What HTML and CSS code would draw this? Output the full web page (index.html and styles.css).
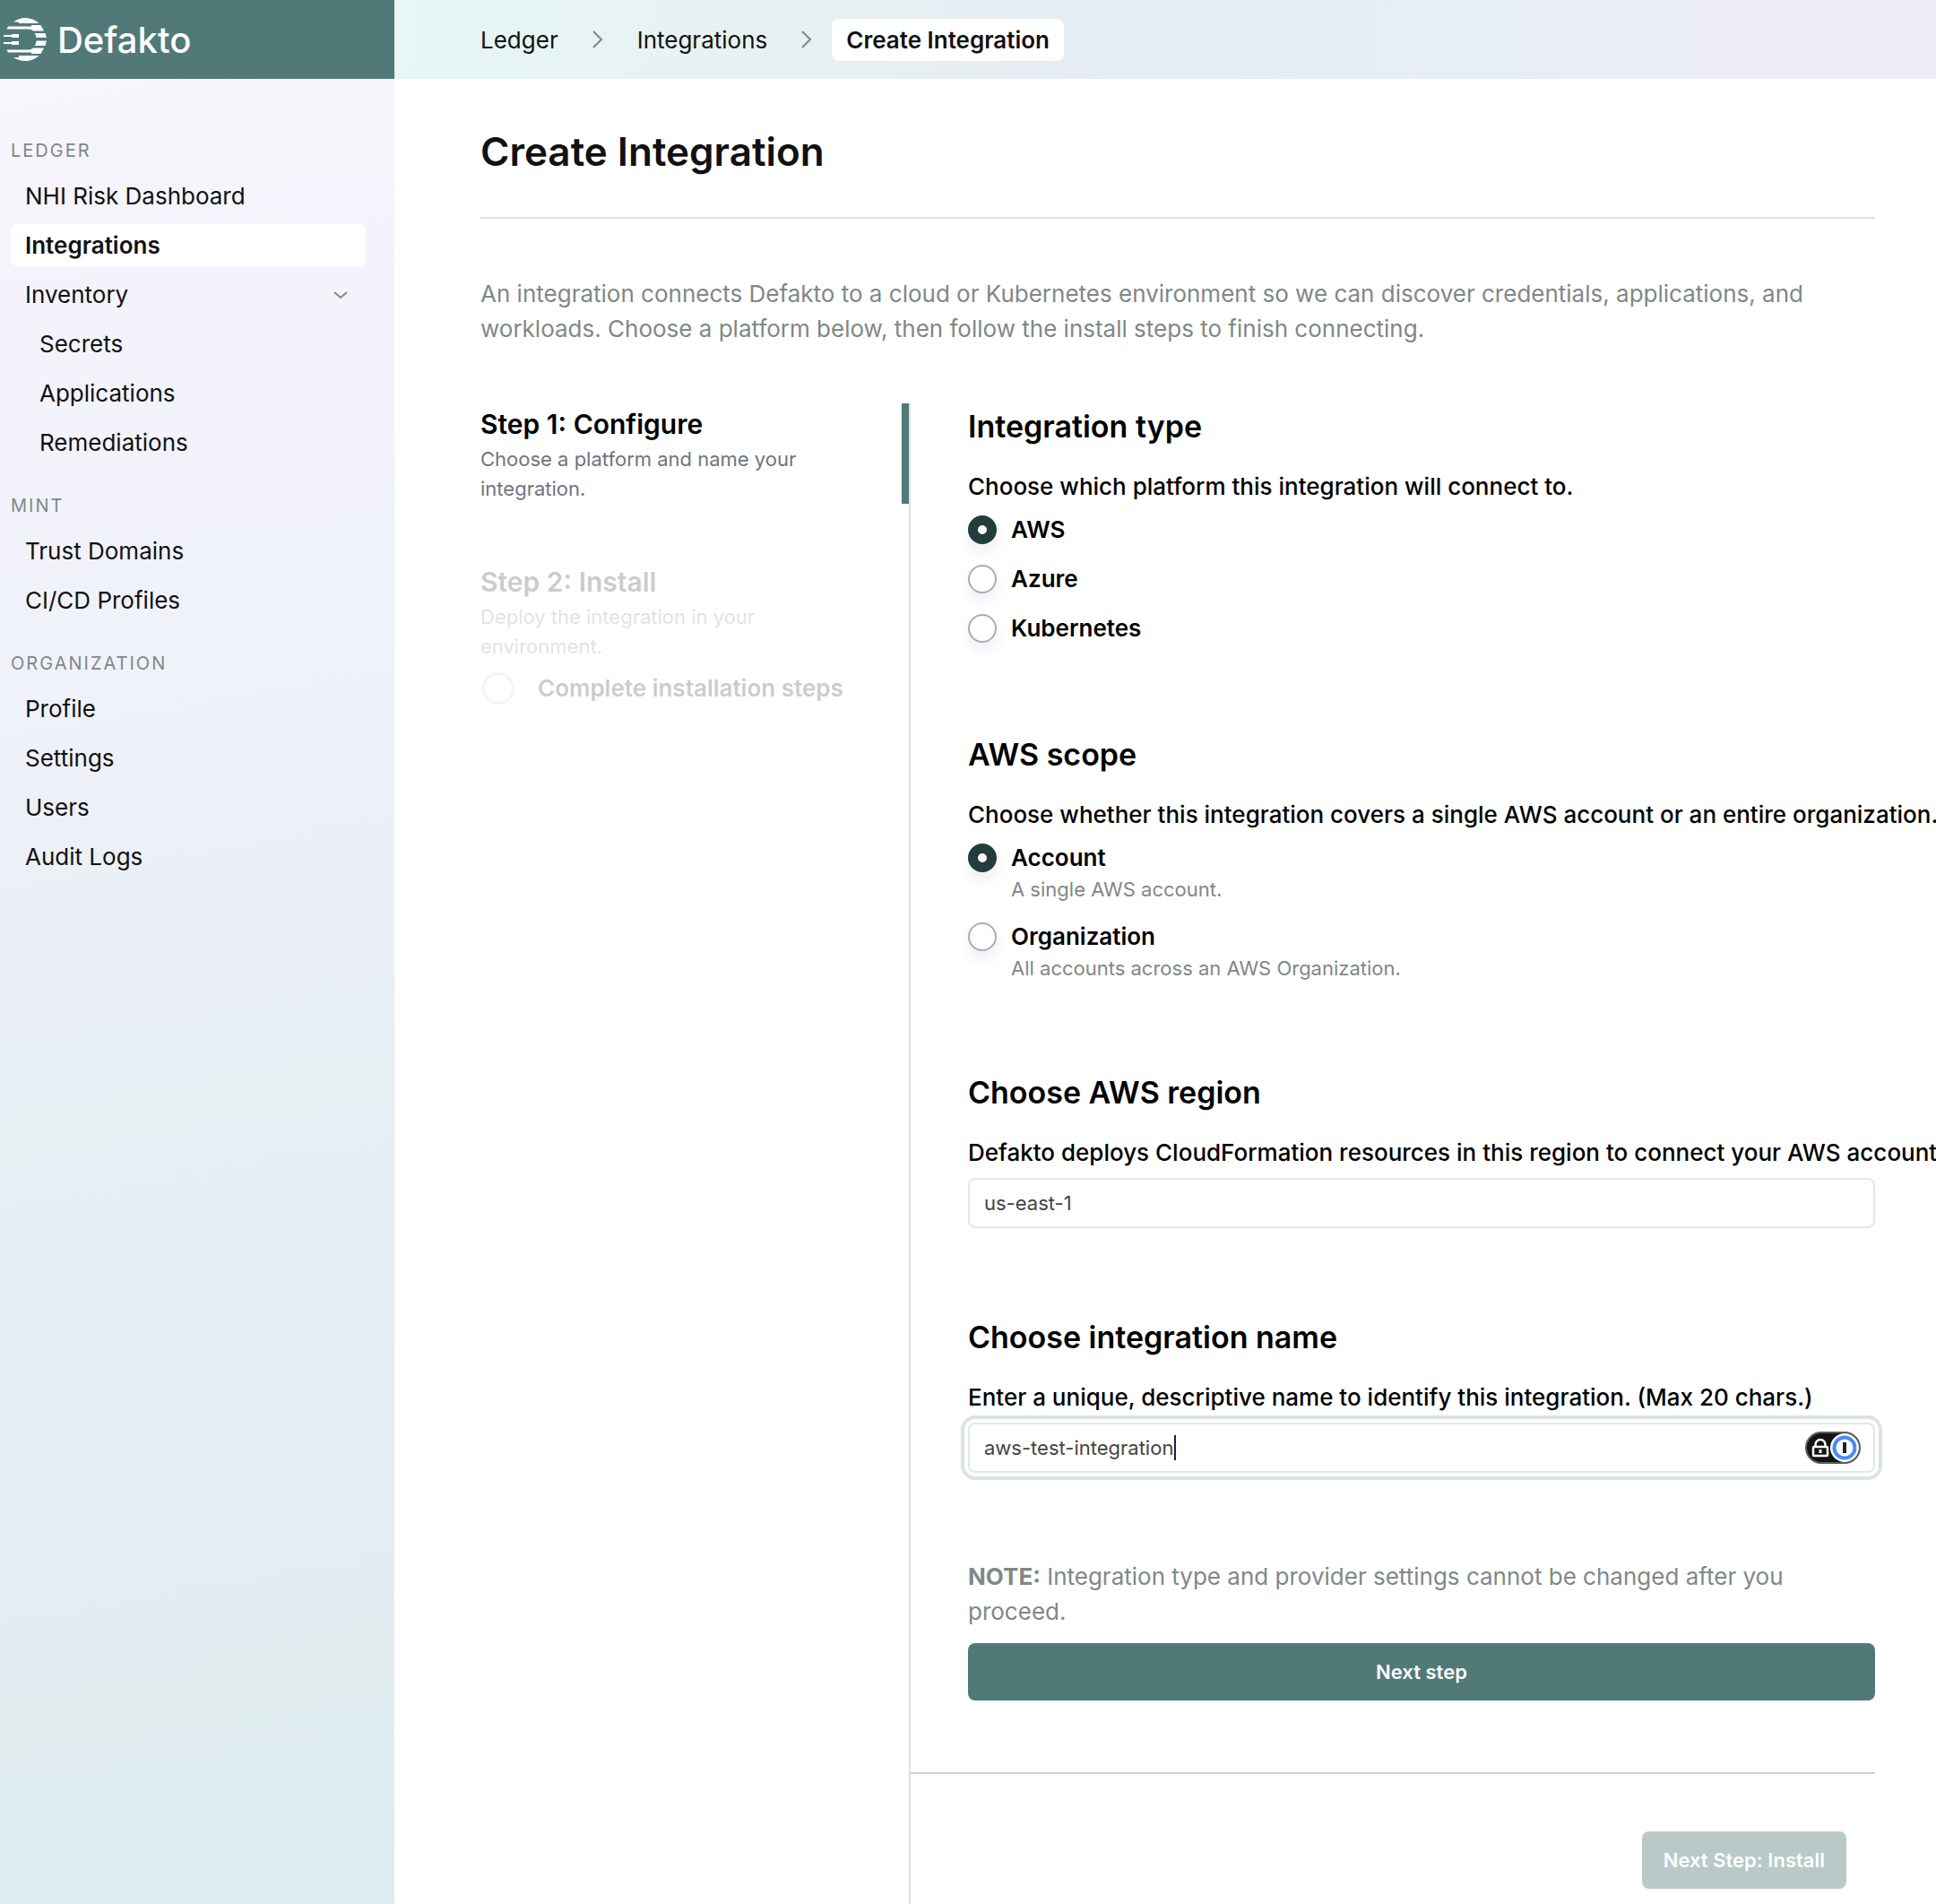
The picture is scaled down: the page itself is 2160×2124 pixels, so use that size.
FILE: index.html
```html
<!DOCTYPE html>
<html lang="en">
<head>
  <meta charset="UTF-8">
  <meta name="viewport" content="width=device-width, initial-scale=1">
  <title>Create Integration - Defakto</title>
  <link rel="stylesheet" href="styles.css">
</head>
<body>

  <aside class="sidebar">
    <a class="logo" href="#">
      <svg class="logo-mark" viewBox="0 0 48 48" fill="#fff" aria-hidden="true">
        <path d="M11 4.5Q17 0 24 0Q33 0 39.500 6H17V4.500Z"/>
        <path d="M31 8H41.500L45 14.500H33Q31 12.500 28 12.500H3.500L5 9.500H31Z"/>
        <path d="M34.500 17H46.500L48 22H36.500Q36.500 19 34.500 17Z"/>
        <path d="M0 19H9V18H17V22H9V21H0Z"/>
        <path d="M0 27H9V26H17V30H9V29H0Z"/>
        <path d="M36.500 25.500H48L46.500 31H34.500Q36.500 29 36.500 25.500Z"/>
        <path d="M3.500 35.500H28Q31 35.500 33 33.500H45L41.500 40H31V38.500H5Z"/>
        <path d="M17 42H39.500Q33 48 24 48Q17 48 11 44H17Z"/>
      </svg>
      <span>Defakto</span>
    </a>

    <nav class="menu">
      <div class="menu-title">LEDGER</div>
      <a href="#">NHI Risk Dashboard</a>
      <a href="#" class="active">Integrations</a>
      <a href="#">Inventory
        <svg class="chevron" viewBox="0 0 16 16" aria-hidden="true"><path d="M1 5l7 6 7-6"/></svg>
      </a>
      <a href="#" class="sub">Secrets</a>
      <a href="#" class="sub">Applications</a>
      <a href="#" class="sub">Remediations</a>

      <div class="menu-title">MINT</div>
      <a href="#">Trust Domains</a>
      <a href="#">CI/CD Profiles</a>

      <div class="menu-title">ORGANIZATION</div>
      <a href="#">Profile</a>
      <a href="#">Settings</a>
      <a href="#">Users</a>
      <a href="#">Audit Logs</a>
    </nav>
  </aside>

  <div class="page">
    <header class="topbar">
      <a href="#">Ledger</a>
      <svg class="separator" viewBox="0 0 12 20" aria-hidden="true"><path d="M1 1l9 9-9 9"/></svg>
      <a href="#">Integrations</a>
      <svg class="separator" viewBox="0 0 12 20" aria-hidden="true"><path d="M1 1l9 9-9 9"/></svg>
      <a href="#" class="current">Create Integration</a>
    </header>

    <main>
      <h1>Create Integration</h1>
      <p class="intro">An integration connects Defakto to a cloud or Kubernetes environment so we can discover credentials, applications, and workloads. Choose a platform below, then follow the install steps to finish connecting.</p>

      <div class="wizard">
        <div class="steps">
          <div class="step current-step">
            <h3>Step 1: Configure</h3>
            <p>Choose a platform and name your integration.</p>
          </div>
          <div class="step disabled">
            <h3>Step 2: Install</h3>
            <p>Deploy the integration in your environment.</p>
            <div class="task"><span class="task-circle"></span>Complete installation steps</div>
          </div>
        </div>

        <form class="form">
          <div class="form-body">
            <section role="radiogroup" aria-labelledby="type-title">
              <h2 id="type-title">Integration type</h2>
              <p class="help">Choose which platform this integration will connect to.</p>
              <div class="options">
                <div class="option">
                  <input type="radio" name="platform" id="aws" checked>
                  <label for="aws">AWS</label>
                </div>
                <div class="option">
                  <input type="radio" name="platform" id="azure">
                  <label for="azure">Azure</label>
                </div>
                <div class="option">
                  <input type="radio" name="platform" id="kubernetes">
                  <label for="kubernetes">Kubernetes</label>
                </div>
              </div>
            </section>

            <section role="radiogroup" aria-labelledby="scope-title">
              <h2 id="scope-title">AWS scope</h2>
              <p class="help">Choose whether this integration covers a single AWS account or an entire organization.</p>
              <div class="options">
                <div class="option">
                  <input type="radio" name="scope" id="account" checked>
                  <label for="account">Account <small>A single AWS account.</small></label>
                </div>
                <div class="option">
                  <input type="radio" name="scope" id="organization">
                  <label for="organization">Organization <small>All accounts across an AWS Organization.</small></label>
                </div>
              </div>
            </section>

            <section>
              <h2>Choose AWS region</h2>
              <label class="help" for="region">Defakto deploys CloudFormation resources in this region to connect your AWS account.</label>
              <input class="text-input" type="text" id="region" value="us-east-1">
            </section>

            <section>
              <h2>Choose integration name</h2>
              <label class="help" for="name">Enter a unique, descriptive name to identify this integration. (Max 20 chars.)</label>
              <div class="name-field">
                <input class="text-input focused" type="text" id="name" maxlength="20" value="aws-test-integration">
                <span class="text-cursor"></span>
                <svg class="password-badge" viewBox="0 0 62 36" aria-hidden="true">
                  <rect x="1" y="1" width="60" height="34" rx="17" fill="#141414" stroke="#5c5c5c" stroke-width="2"/>
                  <circle cx="44" cy="18" r="16" fill="#fff"/>
                  <circle cx="44" cy="18" r="11.500" fill="#fff" stroke="#4a8af4" stroke-width="4"/>
                  <rect x="42" y="12" width="4" height="12" fill="#222"/>
                  <rect x="9" y="17" width="16" height="10" rx="1" fill="none" stroke="#fff" stroke-width="2.500"/>
                  <path d="M11.500 17v-2.500a5.500 5.500 0 0 1 11 0V17" fill="none" stroke="#fff" stroke-width="2.500"/>
                  <rect x="15.500" y="20" width="3" height="4" fill="#fff"/>
                </svg>
              </div>
            </section>

            <div class="submit">
              <p class="note"><strong>NOTE:</strong> Integration type and provider settings cannot be changed after you proceed.</p>
              <button type="submit">Next step</button>
            </div>
          </div>

          <div class="form-footer">
            <button type="button" disabled>Next Step: Install</button>
          </div>
        </form>
      </div>
    </main>
  </div>

</body>
</html>
```
FILE: styles.css
```css
* {
  box-sizing: border-box;
}
body {
  margin: 0;
  display: flex;
  min-height: 100vh;
  font-family: Inter, sans-serif;
  font-size: 26px;
  line-height: 39px;
  color: #111;
  background: #fff;
}
h1, h2, h3, p {
  margin: 0;
}
h1, h2, h3 {
  font-weight: 600;
}
a {
  color: inherit;
  text-decoration: none;
}

/* sidebar */
.sidebar {
  flex: 0 0 440px;
  background: linear-gradient(170deg, #f8f6fc 0%, #f3f3fb 18%, #eff2fa 36%, #ebeff6 46%, #e7eff3 58%, #e4ecf5 72%, #e1edef 88%, #ddebf1 100%);
}
.logo {
  display: flex;
  align-items: center;
  gap: 12px;
  height: 88px;
  padding-left: 4px;
  background: #507978;
  color: #fff;
  font-size: 40px;
  font-weight: 500;
}
.logo-mark {
  width: 48px;
  height: 48px;
}
.menu {
  display: flex;
  flex-direction: column;
  gap: 8px;
  padding: 65px 32px 0 12px;
}
.menu-title {
  margin-bottom: 4px;
  font-size: 20px;
  line-height: 30px;
  letter-spacing: 2px;
  color: #7f8887;
}
.menu a + .menu-title {
  margin-top: 24px;
}
.menu a {
  display: flex;
  align-items: center;
  justify-content: space-between;
  padding: 4px 16px;
  border-radius: 8px;
}
.menu a.active {
  background: #fff;
  font-weight: 600;
}
.menu a.sub {
  padding-left: 32px;
}
.chevron {
  width: 16px;
  height: 16px;
  margin-right: 4px;
}
.chevron path, .separator path {
  fill: none;
  stroke: #7f8887;
  stroke-width: 2;
}

/* top bar */
.page {
  flex: 1;
  min-width: 0;
  display: flex;
  flex-direction: column;
  overflow: hidden;
}
.topbar {
  display: flex;
  align-items: center;
  height: 88px;
  padding-left: 96px;
  background: linear-gradient(100deg, #e8f6f5 0%, #e6eff2 32%, #e4ecf4 48%, #e6eef5 62%, #e9edf6 78%, #efebf8 100%);
}
.separator {
  width: 12px;
  height: 20px;
  margin: 0 38px;
}
.current {
  margin-left: -16px;
  padding: 4px 16px;
  border-radius: 8px;
  background: #fff;
  font-weight: 600;
}

/* content */
main {
  flex: 1;
  display: flex;
  flex-direction: column;
  padding: 48px 68px 0 96px;
}
h1 {
  font-size: 44px;
  line-height: 66px;
  padding-bottom: 40px;
  border-bottom: 2px solid #e0e0e0;
}
.intro {
  margin: 64px 0;
  color: #7f8887;
}
.wizard {
  flex: 1;
  display: flex;
}
.steps {
  flex: 0 0 480px;
  border-right: 2px solid #e0e0e0;
}
.step {
  padding-right: 60px;
  margin-bottom: 64px;
}
.current-step {
  border-right: 8px solid #507978;
}
.step h3 {
  font-size: 30px;
  line-height: 46px;
  color: #000;
}
.step p {
  font-size: 22px;
  line-height: 33px;
  color: #6f7481;
}
.disabled {
  opacity: 0.2;
}
.task {
  display: flex;
  align-items: center;
  gap: 26px;
  margin-top: 10px;
  padding-left: 2px;
  color: #000;
  font-weight: 600;
}
.task-circle {
  width: 36px;
  height: 36px;
  border: 3px solid #d0d0d0;
  border-radius: 50%;
}

/* form */
.form {
  flex: 1;
  min-width: 0;
  color: #000;
}
.form-body {
  display: flex;
  flex-direction: column;
  gap: 96px;
  padding: 0 0 80px 64px;
  border-bottom: 2px solid #ceccd4;
}
h2 {
  font-size: 34px;
  line-height: 51px;
  margin-bottom: 22px;
}
.help {
  display: block;
  margin-bottom: 9px;
  font-weight: 500;
  white-space: nowrap;
}
.options {
  display: flex;
  flex-direction: column;
  gap: 16px;
}
.option {
  display: flex;
  gap: 16px;
}
.option input {
  appearance: none;
  width: 32px;
  height: 32px;
  margin: 4px 0 0;
  border: 2px solid #aaabb9;
  border-radius: 50%;
  background: #fff;
  box-shadow: 0 8px 16px rgba(30, 40, 90, 0.08);
}
.option input:checked {
  border: 11px solid #243c3c;
}
.option label {
  font-weight: 600;
}
.option small {
  display: block;
  font-size: 22px;
  line-height: 33px;
  font-weight: 400;
  color: #7f8887;
}
.text-input {
  display: block;
  width: 100%;
  height: 56px;
  padding: 0 16px;
  border: 2px solid #e2e6ec;
  border-radius: 8px;
  font: 22px Inter, sans-serif;
  color: #444;
  background: #fff;
}
.focused {
  outline: 4px solid #dbe4e2;
  outline-offset: 4px;
}
.name-field {
  position: relative;
}
.text-cursor {
  position: absolute;
  top: 14px;
  left: 230px;
  width: 2px;
  height: 28px;
  background: #222;
}
.password-badge {
  position: absolute;
  top: 10px;
  right: 16px;
  width: 62px;
  height: 36px;
}
.note {
  margin-bottom: 16px;
  color: #7f8887;
}
button {
  height: 64px;
  padding: 0 24px;
  border: 0;
  border-radius: 8px;
  background: #507978;
  color: #fff;
  font: 600 22px Inter, sans-serif;
}
.submit button {
  width: 100%;
}
button:disabled {
  background: #b8c9c8;
}
.form-footer {
  display: flex;
  justify-content: flex-end;
  padding: 64px 32px 16px 0;
}
```
